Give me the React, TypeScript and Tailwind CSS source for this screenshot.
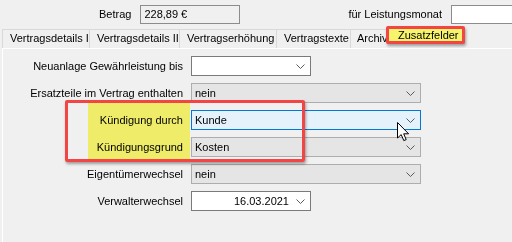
function Chevron() {
  return (
    <svg width="9" height="5" viewBox="0 0 9 5" className="shrink-0">
      <polyline points="0.5,0.5 4.5,4.5 8.5,0.5" fill="none" stroke="#5a5a5a" strokeWidth="1" />
    </svg>
  );
}

type Combo = "white" | "gray" | "focus";

function ComboBox({ kind, text, width, align = "left" }: { kind: Combo; text?: string; width: string; align?: "left" | "right" }) {
  const look =
    kind === "white"
      ? "bg-white border-[#7a7a7a]"
      : kind === "focus"
      ? "bg-[#e5f1fb] border-[#0078d7]"
      : "bg-[#e5e5e5] border-[#adadad]";
  return (
    <div className={`${width} h-[20px] border ${look} flex items-center pl-[3px] pr-[5px]`}>
      <span className={`flex-1 ${align === "right" ? "text-right pr-[7px]" : ""}`}>{text}</span>
      <Chevron />
    </div>
  );
}

function Row({ label, children }: { label: string; children: React.ReactNode }) {
  return (
    <div className="flex items-center h-[20px]">
      <div className="w-[181px] text-right pr-[1px]">{label}</div>
      <div className="ml-[7px]">{children}</div>
    </div>
  );
}

const tabs = [
  { label: "Vertragsdetails I", w: "w-[88px]" },
  { label: "Vertragsdetails II", w: "w-[90px]" },
  { label: "Vertragserhöhung", w: "w-[97px]" },
  { label: "Vertragstexte", w: "w-[74px]" },
];

export default function App() {
  return (
    <div
      className="relative w-[512px] h-[242px] overflow-hidden bg-[#f0f0f0] text-[11px] text-black"
      style={{ fontFamily: '"Liberation Sans", Arial, sans-serif' }}
    >
      {/* header fields */}
      <div className="flex items-center h-[29px] pl-[99px] whitespace-nowrap">
        <span className="shrink-0">Betrag</span>
        <div className="shrink-0 ml-[9px] w-[100px] h-[19px] border border-[#8c8c8c] bg-[#f0f0f0] flex items-center pl-[3px]">
          228,89 €
        </div>
        <span className="shrink-0 ml-[108px]">für Leistungsmonat</span>
        <div className="shrink-0 ml-[9px] w-[80px] h-[19px] border border-[#8c8c8c] bg-white" />
      </div>

      {/* tab strip */}
      <div className="flex items-end h-[19px] pl-[2px] whitespace-nowrap">
        {tabs.map((t) => (
          <div
            key={t.label}
            className={`${t.w} shrink-0 h-[19px] border-t border-r border-[#d9d9d9] first:border-l flex items-center pl-[7px] pb-[1px]`}
          >
            {t.label}
          </div>
        ))}
        <div className="w-[40px] shrink-0 h-[19px] border-t border-[#d9d9d9] flex items-center pl-[6px] pb-[1px]">
          Archiv
        </div>
        <div className="relative z-10 shrink-0 self-start -mt-[3px] -ml-[5px] w-[79px] h-[18px] border-[3px] border-[#f24545] rounded-[2px] bg-[#f6f46c] shadow-[1px_2px_3px_rgba(0,0,0,0.35)] flex items-center pl-[9px] pt-[1px]">
          Zusatzfelder
        </div>
      </div>

      {/* tab page */}
      <div className="h-[194px] ml-[2px] border-t border-l border-white pt-[7px] flex flex-col gap-[7px]">
        <Row label="Neuanlage Gewährleistung bis">
          <ComboBox kind="white" width="w-[120px]" />
        </Row>
        <Row label="Ersatzteile im Vertrag enthalten">
          <ComboBox kind="gray" text="nein" width="w-[230px]" />
        </Row>
        <Row label="Kündigung durch">
          <ComboBox kind="focus" text="Kunde" width="w-[230px]" />
        </Row>
        <Row label="Kündigungsgrund">
          <ComboBox kind="gray" text="Kosten" width="w-[230px]" />
        </Row>
        <Row label="Eigentümerwechsel">
          <ComboBox kind="gray" text="nein" width="w-[230px]" />
        </Row>
        <Row label="Verwalterwechsel">
          <ComboBox kind="white" text="16.03.2021" width="w-[120px]" align="right" />
        </Row>
      </div>

      {/* annotation: highlighter + red frame */}
      <div className="absolute left-[88px] top-[103px] w-[102px] h-[57px] bg-[#fdfb6e] mix-blend-multiply" />
      <div className="absolute left-[65px] top-[100px] w-[240px] h-[62px] border-[3px] border-[#f24545] rounded-[2px] shadow-[1px_2px_3px_rgba(0,0,0,0.35)]" />

      {/* mouse cursor */}
      <svg className="absolute left-[397px] top-[122px]" width="13" height="20" viewBox="0 0 13 20">
        <path
          d="M0.5 0.5 L0.5 16 L4.2 12.6 L6.8 18.6 L9.2 17.6 L6.7 11.8 L11.6 11.8 Z"
          fill="white"
          stroke="black"
          strokeWidth="1"
          strokeLinejoin="round"
        />
      </svg>
    </div>
  );
}
